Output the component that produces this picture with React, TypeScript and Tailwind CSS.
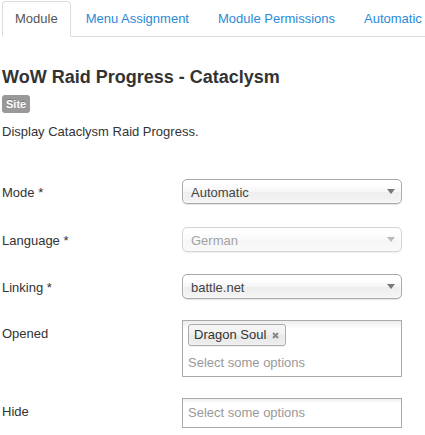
import React from "react";

const font = { fontFamily: '"Liberation Sans", Arial, sans-serif' };

function Arrow() {
  return (
    <svg width="8" height="5" viewBox="0 0 8 5" className="shrink-0">
      <path d="M0 0 L8 0 L4 5 Z" fill="#777" />
    </svg>
  );
}

function ChosenSingle({ value, disabled }: { value: string; disabled?: boolean }) {
  return (
    <div
      className={
        "flex h-[25px] w-[220px] items-center justify-between rounded-[5px] border border-[#aaa] bg-[linear-gradient(#fff_20%,#f6f6f6_50%,#eee_52%,#f4f4f4_100%)] pl-[8px] pr-[6px] shadow-[0_1px_1px_rgba(0,0,0,0.1),inset_0_0_3px_#fff] " +
        (disabled ? "opacity-50" : "")
      }
    >
      <span className="pt-[1px] leading-[23px] text-[#444]">{value}</span>
      <Arrow />
    </div>
  );
}

function Label({ text }: { text: string }) {
  return <div className="w-[180px] shrink-0 pt-[5px] leading-[18px] text-[#333]">{text}</div>;
}

export default function App() {
  return (
    <div className="h-[435px] w-[425px] overflow-hidden bg-white text-[13px] text-[#333]" style={font}>
      <div className="pl-[2px]">
        {/* Tabs */}
        <div className="mt-[1px] flex h-[36px] whitespace-nowrap border-b border-[#ddd]">
          <div className="-mb-px mr-[2px] rounded-t-[4px] border border-[#ddd] border-b-white bg-white px-[12px] py-[8px] leading-[18px] text-[#555]">
            Module
          </div>
          <div className="-mb-px mr-[2px] border border-transparent px-[12px] py-[8px] leading-[18px] text-[#2a8ad8]">
            Menu Assignment
          </div>
          <div className="-mb-px mr-[2px] border border-transparent pl-[13px] pr-[12px] py-[8px] leading-[18px] text-[#2a8ad8]">
            Module Permissions
          </div>
          <div className="-mb-px mr-[2px] border border-transparent pl-[13px] pr-[12px] py-[8px] leading-[18px] text-[#2a8ad8]">
            Automatic
          </div>
        </div>

        {/* Title */}
        <h2 className="mt-[30px] text-[18px] font-bold leading-[20px] text-[#333]">WoW Raid Progress - Cataclysm</h2>
        <div className="mt-[8px] flex">
          <span className="rounded-[3px] bg-[#999] px-[4px] py-[2px] text-[11px] font-bold leading-[14px] text-white [text-shadow:0_-1px_0_rgba(0,0,0,0.25)]">
            Site
          </span>
        </div>
        <p className="mt-[10px] leading-[18px]">Display Cataclysm Raid Progress.</p>

        {/* Form */}
        <div className="mt-[38px] flex">
          <Label text="Mode *" />
          <ChosenSingle value="Automatic" />
        </div>
        <div className="mt-[23px] flex">
          <Label text="Language *" />
          <ChosenSingle value="German" disabled />
        </div>
        <div className="mt-[22px] flex">
          <Label text="Linking *" />
          <ChosenSingle value="battle.net" />
        </div>
        <div className="mt-[21px] flex">
          <Label text="Opened" />
          <div className="w-[220px] border border-[#aaa] bg-white bg-[linear-gradient(#eee_1%,#fff_15%)] px-[5px]">
            <div className="flex">
              <span className="my-[3px] mr-[5px] inline-flex h-[22px] items-center rounded-[3px] border border-[#aaa] bg-[linear-gradient(#f4f4f4_20%,#f0f0f0_50%,#e8e8e8_52%,#eee_100%)] pl-[5px] pr-[6px] leading-[14px] text-[#333] shadow-[inset_0_0_2px_#fff,0_1px_0_rgba(0,0,0,0.05)]">
                Dragon Soul
                <svg width="7" height="7" viewBox="0 0 7 7" className="ml-[6px]">
                  <path d="M1 1 L6 6 M6 1 L1 6" stroke="#888" strokeWidth="2" strokeLinecap="butt" />
                </svg>
              </span>
            </div>
            <div className="my-[1px] h-[25px] leading-[25px] text-[#999]">Select some options</div>
          </div>
        </div>
        <div className="mt-[21px] flex">
          <Label text="Hide" />
          <div className="w-[220px] border border-[#aaa] bg-white bg-[linear-gradient(#eee_1%,#fff_15%)] px-[5px]">
            <div className="my-[1px] h-[26px] leading-[26px] text-[#999]">Select some options</div>
          </div>
        </div>
      </div>
    </div>
  );
}
